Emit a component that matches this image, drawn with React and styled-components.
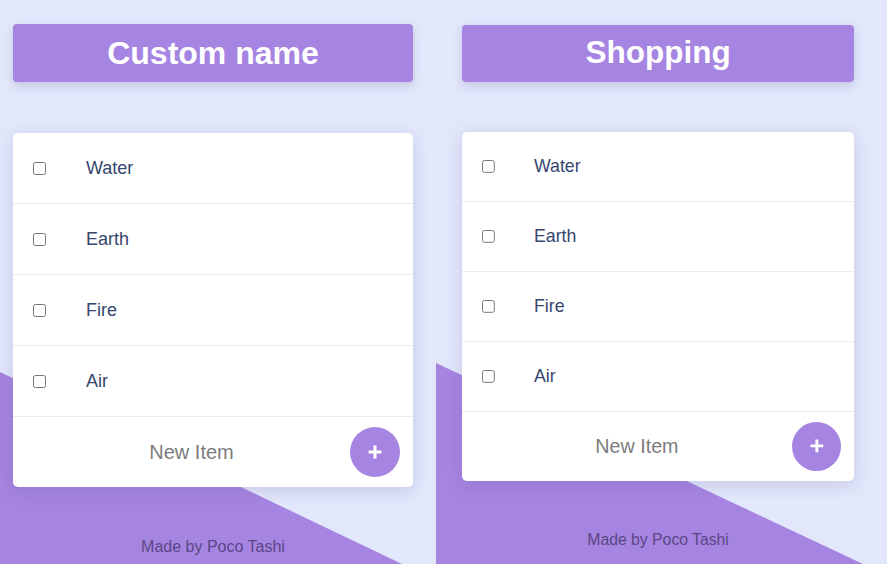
import React from 'react';
import styled, { createGlobalStyle } from 'styled-components';

const lists = [
  { title: 'Custom name', items: ['Water', 'Earth', 'Fire', 'Air'], zoom: 1, width: 400, top: 24, left: 13, triTop: 372, triEnd: 402 },
  { title: 'Shopping', items: ['Water', 'Earth', 'Fire', 'Air'], zoom: 0.985, width: 398, top: 25, left: 26.5, triTop: 363, triEnd: 427 },
];

export default function App() {
  return (
    <>
      <GlobalStyle />
      <Page>
        {lists.map((list) => (
          <Panel key={list.title} $triTop={list.triTop} $triEnd={list.triEnd}>
            <Column $zoom={list.zoom} $width={list.width} $top={list.top} $left={list.left}>
              <Header>
                <Title>{list.title}</Title>
              </Header>
              <Card>
                {list.items.map((item) => (
                  <Row key={item}>
                    <Check type="checkbox" />
                    <Label>{item}</Label>
                  </Row>
                ))}
                <AddRow>
                  <NewInput placeholder="New Item" />
                  <AddButton aria-label="Add item">
                    <svg width="16" height="16" viewBox="0 0 16 16">
                      <path d="M8 1.5v13M1.5 8h13" stroke="#fff" strokeWidth="3" strokeLinecap="butt" />
                    </svg>
                  </AddButton>
                </AddRow>
              </Card>
              <Credit>Made by Poco Tashi</Credit>
            </Column>
          </Panel>
        ))}
      </Page>
    </>
  );
}

const GlobalStyle = createGlobalStyle`
  html, body {
    margin: 0;
    padding: 0;
    overflow: hidden;
    background: #e2e7fb;
  }
  body {
    font-family: "Liberation Sans", Arial, Helvetica, sans-serif;
  }
`;

const Page = styled.div`
  display: flex;
  width: 887px;
  height: 564px;
  background: #e2e7fb;
`;

const Panel = styled.section`
  position: relative;
  height: 564px;
  flex: 0 0 auto;
  width: 436px;
  overflow: hidden;

  &:last-child {
    flex: 1;
  }

  &::before {
    content: '';
    position: absolute;
    inset: 0;
    background: #a684e1;
    clip-path: polygon(0 ${(p) => p.$triTop}px, ${(p) => p.$triEnd}px 100%, 0 100%);
  }
`;

const Column = styled.div`
  position: relative;
  zoom: ${(p) => p.$zoom};
  width: ${(p) => p.$width}px;
  padding-top: ${(p) => p.$top}px;
  padding-left: ${(p) => p.$left}px;
  display: flex;
  flex-direction: column;
`;

const Header = styled.header`
  height: 58px;
  background: #a684e1;
  border-radius: 4px;
  box-shadow: 0 4px 10px rgba(70, 70, 130, 0.2);
  display: flex;
  align-items: center;
  justify-content: center;
`;

const Title = styled.h1`
  margin: 0;
  color: #fff;
  font-size: 32px;
  font-weight: 700;
  line-height: 1;
`;

const Card = styled.div`
  margin-top: 51px;
  background: #fff;
  border-radius: 5px;
  box-shadow: 0 4px 16px rgba(70, 70, 130, 0.18);
  display: flex;
  flex-direction: column;
`;

const Row = styled.label`
  height: 70px;
  border-bottom: 1px solid #ececf0;
  display: flex;
  align-items: center;
  padding-left: 20px;
  gap: 40px;
`;

const Check = styled.input`
  margin: 0;
  width: 13px;
  height: 13px;
`;

const Label = styled.span`
  font-size: 18px;
  color: #35466f;
`;

const AddRow = styled.div`
  height: 70px;
  display: flex;
  align-items: center;
  padding: 0 13px 0 20px;
`;

const NewInput = styled.input`
  flex: 1;
  min-width: 0;
  border: none;
  outline: none;
  background: transparent;
  text-align: center;
  font-family: inherit;
  font-size: 20px;
  color: #555;

  &::placeholder {
    color: #7c7c7c;
  }
`;

const AddButton = styled.button`
  width: 50px;
  height: 50px;
  border-radius: 50%;
  border: none;
  background: #a684e1;
  display: flex;
  align-items: center;
  justify-content: center;
  padding: 0;
  cursor: pointer;
`;

const Credit = styled.p`
  margin: 51px 0 0;
  text-align: center;
  font-size: 16px;
  line-height: 18px;
  color: #5a4785;
`;
